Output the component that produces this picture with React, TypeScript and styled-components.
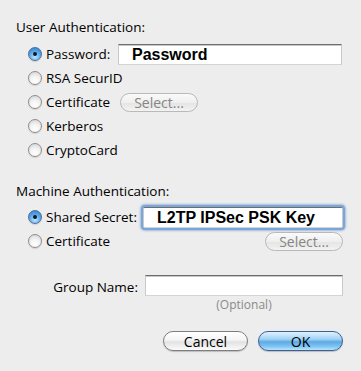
import React from 'react'
import styled, { createGlobalStyle } from 'styled-components'

const GlobalStyle = createGlobalStyle`
  html, body {
    margin: 0;
    padding: 0;
    background: #ededed;
  }
  body {
    font-family: "Lucida Grande", "Open Sans", sans-serif;
    font-size: 13.5px;
    color: #000;
  }
`

const Sheet = styled.div`
  width: 361px;
  height: 371px;
  box-sizing: border-box;
  padding: 19px 18px 0 16px;
  display: flex;
  flex-direction: column;
`

const Heading = styled.div<{ $gap?: number }>`
  height: 16px;
  line-height: 16px;
  margin-top: ${p => p.$gap || 0}px;
`

const Options = styled.div<{ $top: number }>`
  display: flex;
  flex-direction: column;
  padding-left: 12px;
  margin-top: ${p => p.$top}px;
`

const Row = styled.div<{ $h?: number }>`
  display: flex;
  align-items: center;
  height: ${p => p.$h || 24}px;
`

const RadioDot = styled.span<{ $on?: boolean }>`
  position: relative;
  width: 14px;
  height: 14px;
  box-sizing: border-box;
  border-radius: 50%;
  flex: none;
  border: 1px solid ${p => (p.$on ? '#4a6f9c' : '#8e8e8e')};
  background: ${p =>
    p.$on
      ? 'radial-gradient(circle at 50% 75%, #bfe6ff 0%, #5aa8ea 50%, #2d79c6 100%)'
      : 'radial-gradient(circle at 50% 75%, #ffffff 0%, #f2f2f2 45%, #cfcfcf 100%)'};
  box-shadow: 0 1px 1px rgba(0, 0, 0, 0.12);
  &::after {
    content: '';
    display: ${p => (p.$on ? 'block' : 'none')};
    position: absolute;
    left: 4px;
    top: 4px;
    width: 4px;
    height: 4px;
    border-radius: 50%;
    background: #0d1a2a;
  }
`

const Label = styled.span<{ $w?: number }>`
  margin-left: 4px;
  width: ${p => (p.$w ? `${p.$w}px` : 'auto')};
  flex: none;
  line-height: 16px;
`

const Field = styled.div<{ $focus?: boolean; $w: number }>`
  width: ${p => p.$w}px;
  height: 21px;
  box-sizing: border-box;
  background: #fff;
  border: 1px solid #9a9a9a;
  border-top-color: #6d6d6d;
  border-left-color: #c9c9c9;
  border-right-color: #c9c9c9;
  border-bottom-color: #d4d4d4;
  box-shadow: ${p =>
    p.$focus ? '0 0 0 2px #7aa6d8, 0 0 2px 3px rgba(90, 140, 210, 0.5)' : 'inset 0 1px 0 #c8c8c8'};
  border-radius: ${p => (p.$focus ? '2px' : '0')};
  font-family: "Liberation Sans", Arial, sans-serif;
  font-weight: bold;
  font-size: 16px;
  line-height: 19px;
  color: #000;
  padding-left: 13px;
  white-space: nowrap;
`

const PillButton = styled.div<{ $w: number; $primary?: boolean; $dim?: boolean }>`
  width: ${p => p.$w}px;
  height: ${p => (p.$dim ? 19 : 20)}px;
  box-sizing: border-box;
  border-radius: 10px;
  flex: none;
  display: flex;
  align-items: center;
  justify-content: center;
  font-size: 14px;
  color: ${p => (p.$dim ? '#858585' : '#000')};
  border: 1px solid ${p => (p.$primary ? '#3f5f93' : p.$dim ? '#b9b9b9' : '#7e7e7e')};
  background: ${p =>
    p.$primary
      ? 'linear-gradient(#e1f2fd 0%, #9fd2f5 40%, #5ea9e6 55%, #7fc4f3 80%, #b8e4fc 100%)'
      : p.$dim
      ? 'linear-gradient(#fafafa, #efefef 50%, #e4e4e4 52%, #f3f3f3)'
      : 'linear-gradient(#ffffff 0%, #f5f5f5 45%, #e2e2e2 55%, #fbfbfb 100%)'};
  box-shadow: ${p => (p.$dim ? 'none' : '0 1px 1px rgba(0,0,0,0.2)')};
`

const GroupRow = styled.div`
  display: flex;
  align-items: center;
  margin-top: 22px;
  height: 21px;
`

const GroupLabel = styled.span`
  width: 129px;
  text-align: right;
  padding-right: 7px;
  box-sizing: border-box;
  flex: none;
  padding-top: 3px;
`

const Hint = styled.div`
  margin-top: 2px;
  padding-left: 129px;
  width: 198px;
  text-align: center;
  font-size: 12px;
  line-height: 13px;
  color: #8a8a8a;
`

const Buttons = styled.div`
  display: flex;
  justify-content: flex-end;
  gap: 10px;
  margin-top: 20px;
`

type Opt = { label: string; on?: boolean; w?: number; extra?: React.ReactNode }

const RadioRow: React.FC<Opt> = ({ label, on, w, extra }) => (
  <Row>
    <RadioDot $on={on} />
    <Label $w={w}>{label}</Label>
    {extra}
  </Row>
)

export default function App() {
  return (
    <>
      <GlobalStyle />
      <Sheet>
        <Heading>User Authentication:</Heading>
        <Options $top={7}>
          <RadioRow label="Password:" on w={72} extra={<Field $w={224}>Password</Field>} />
          <RadioRow label="RSA SecurID" />
          <RadioRow
            label="Certificate"
            w={74}
            extra={<PillButton $w={78} $dim>Select...</PillButton>}
          />
          <RadioRow label="Kerberos" />
          <RadioRow label="CryptoCard" />
        </Options>
        <Heading $gap={21}>Machine Authentication:</Heading>
        <Options $top={6}>
          <RadioRow
            label="Shared Secret:"
            on
            w={97}
            extra={
              <Field $w={200} $focus>
                L2TP IPSec PSK Key
              </Field>
            }
          />
          <RadioRow
            label="Certificate"
            w={219}
            extra={<PillButton $w={78} $dim>Select...</PillButton>}
          />
        </Options>
        <GroupRow>
          <GroupLabel>Group Name:</GroupLabel>
          <Field $w={198} />
        </GroupRow>
        <Hint>(Optional)</Hint>
        <Buttons>
          <PillButton $w={85}>Cancel</PillButton>
          <PillButton $w={85} $primary>OK</PillButton>
        </Buttons>
      </Sheet>
    </>
  )
}
